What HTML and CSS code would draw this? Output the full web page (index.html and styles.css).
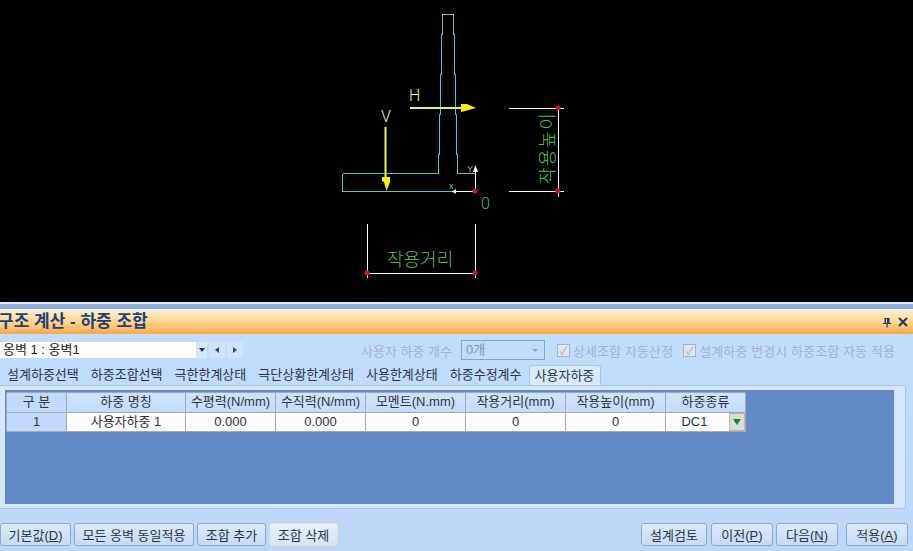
FILE: index.html
```html
<!DOCTYPE html>
<html lang="ko">
<head>
    <meta charset="UTF-8">
    <title>구조 계산 - 하중 조합</title>
    <link rel="stylesheet" href="styles.css">
</head>
<body>
    <div class="cad-view">
        <svg class="cad-svg" width="913" height="302" viewBox="0 0 913 302">
            <!-- wall outline -->
            <path class="wall" d="M342.5 173.5H438.5V154H439.5V114H440.5V74H441.5V34H442.5V14.5H453.5V34H454.5V74H455.5V114H456.5V154H457.5V173.5H475M342.5 173.5V191.5H452"/>
            <!-- axes -->
            <path class="dim" d="M452 191.5H475.5M475.5 191.5V170"/>
            <path class="axis-head" d="M452 191.5L456 189V194ZM475.5 165L473 172H478Z"/>
            <text class="axis-label" x="449" y="189">x</text>
            <text class="axis-label" x="467" y="172">Y</text>
            <!-- dimension lines -->
            <path class="dim" d="M509 108.5H564M509 191.5H564M558.5 108V197M367.5 224V278M475.5 224V278M367 273.5H475"/>
            <circle class="node" cx="558" cy="108" r="2.5"/>
            <circle class="node" cx="558" cy="191" r="2.5"/>
            <circle class="node" cx="475" cy="191" r="2.5"/>
            <circle class="node" cx="367" cy="273" r="2.5"/>
            <circle class="node" cx="475" cy="273" r="2.5"/>
            <!-- loads -->
            <path class="load" d="M410 108H462"/>
            <path class="load-head" d="M461 104H467L476 108L467 110.500L461 112Z"/>
            <path class="load" d="M385.500 127V178"/>
            <path class="load-head" d="M382 177H390V182L386.500 191L384 182L382 181Z"/>
            <text class="load-label" x="409" y="101">H</text>
            <text class="load-label" x="381" y="122">V</text>
            <!-- labels -->
            <text class="cad-label" x="387" y="266">작용거리</text>
            <text class="cad-label cad-label-side" transform="translate(554 184) rotate(-90)">작용높이</text>
            <text class="cad-zero" x="481" y="209">0</text>
        </svg>
    </div>
    <div class="splitter"></div>

    <div class="title-bar">
        <h1>구조 계산 - 하중 조합</h1>
        <div class="title-icons">
            <svg width="10" height="11" viewBox="0 0 10 11"><path d="M2.500 1H7.500V6H9V7H5.700V10.500H4.500V7H1V6H2.500ZM4 2V6H5V2Z" fill="#1c3a63"/></svg>
            <svg width="10" height="10" viewBox="0 0 10 10"><path d="M1 1L9 9M9 1L1 9" stroke="#1c3a63" stroke-width="2"/></svg>
        </div>
    </div>

    <div class="panel">
        <div class="option-row">
            <div class="wall-select">
                <span class="wall-combo">옹벽 1 : 옹벽1</span>
                <span class="combo-btn"><i class="arrow-down"></i></span>
                <span class="spin-btn"><i class="arrow-left"></i></span>
                <span class="spin-btn"><i class="arrow-right"></i></span>
            </div>
            <div class="options">
                <span class="muted count-label">사용자 하중 개수</span>
                <span class="count-combo">0개<i class="arrow-small"></i></span>
                <label class="check muted"><span class="check-box">✓</span>상세조합 자동산정</label>
                <label class="check muted"><span class="check-box">✓</span>설계하중 변경시 하중조합 자동 적용</label>
            </div>
        </div>

        <div class="tabs">
            <span class="tab">설계하중선택</span>
            <span class="tab">하중조합선택</span>
            <span class="tab">극한한계상태</span>
            <span class="tab">극단상황한계상태</span>
            <span class="tab">사용한계상태</span>
            <span class="tab">하중수정계수</span>
            <span class="tab active">사용자하중</span>
        </div>

        <div class="tab-body">
            <div class="grid-area">
                <table class="load-table">
                    <colgroup>
                        <col class="col-no">
                        <col class="col-name">
                        <col class="col-force">
                        <col class="col-force">
                        <col class="col-wide">
                        <col class="col-wide">
                        <col class="col-wide">
                        <col class="col-type">
                    </colgroup>
                    <thead>
                        <tr>
                            <th class="first">구 분</th>
                            <th>하중 명칭</th>
                            <th>수평력(N/mm)</th>
                            <th>수직력(N/mm)</th>
                            <th>모멘트(N.mm)</th>
                            <th>작용거리(mm)</th>
                            <th>작용높이(mm)</th>
                            <th>하중종류</th>
                        </tr>
                    </thead>
                    <tbody>
                        <tr>
                            <td class="first">1</td>
                            <td>사용자하중 1</td>
                            <td>0.000</td>
                            <td>0.000</td>
                            <td>0</td>
                            <td>0</td>
                            <td>0</td>
                            <td class="type-cell">DC1<span class="cell-btn"><i class="arrow-green"></i></span></td>
                        </tr>
                    </tbody>
                </table>
            </div>
        </div>

        <div class="button-row">
            <div class="button-group">
                <button class="btn btn-default">기본값(<u>D</u>)</button>
                <button class="btn btn-all">모든 옹벽 동일적용</button>
                <button class="btn btn-combo">조합 추가</button>
                <button class="btn btn-combo hot">조합 삭제</button>
            </div>
            <div class="button-group">
                <button class="btn btn-check">설계검토</button>
                <button class="btn btn-nav">이전(<u>P</u>)</button>
                <button class="btn btn-nav">다음(<u>N</u>)</button>
                <button class="btn btn-nav btn-apply">적용(<u>A</u>)</button>
            </div>
        </div>
    </div>
</body>
</html>
```

FILE: styles.css
```css
:root {
    --panel-blue: #bfd9fb;
    --grid-blue: #6089c5;
    --header-blue: #c2dafa;
    --line-gray: #a3a9b2;
    --text-dark: #2f343c;
    --text-muted: #a3b3c8;
    --cad-green: #4cc44c;
    --cad-yellow: #f4f04a;
}

* {
    box-sizing: border-box;
}

body {
    margin: 0;
    width: 913px;
    height: 551px;
    overflow: hidden;
    font-family: "Liberation Sans", "Noto Sans CJK KR", sans-serif;
    font-size: 13px;
    color: var(--text-dark);
    background: var(--panel-blue);
}

/* drawing area */
.cad-view {
    height: 302px;
    background: #000;
}

.cad-svg {
    display: block;
}

.wall {
    fill: none;
    stroke: #45c9cf;
    stroke-width: 1;
    shape-rendering: crispEdges;
}

.dim {
    fill: none;
    stroke: #fff;
    stroke-width: 1;
    shape-rendering: crispEdges;
}

.axis-head {
    fill: #fff;
}

.axis-label {
    font-size: 9px;
    fill: #a8a8a8;
}

.node {
    fill: #e01010;
}

.load {
    fill: none;
    stroke: var(--cad-yellow);
    stroke-width: 2;
}

.load-head {
    fill: #f8f000;
}

.load-label {
    font-family: Roboto, sans-serif;
    font-size: 16px;
    font-weight: 300;
    fill: #f6f68a;
}

.cad-label {
    font-family: "Noto Sans CJK KR", sans-serif;
    font-size: 18px;
    font-weight: 300;
    fill: var(--cad-green);
}

.cad-label-side {
    letter-spacing: 1.500px;
}

.cad-zero {
    font-family: Roboto, sans-serif;
    font-size: 16px;
    font-weight: 300;
    fill: var(--cad-green);
}

.splitter {
    height: 7px;
    border-top: 2px solid #dfe9f3;
    background: #8db0e1;
}

/* title */
.title-bar {
    height: 25px;
    padding: 0 5px 0 0;
    display: flex;
    justify-content: space-between;
    align-items: center;
    border-top: 1px solid #f6f3ea;
    background: linear-gradient(#fff0d2, #ffd592 50%, #f9a94a);
}

.title-bar h1 {
    margin: 0 0 0 -2px;
    font-size: 17px;
    line-height: 24px;
    color: #1d4272;
}

.title-icons {
    display: flex;
    align-items: center;
    gap: 6px;
}

/* option row */
.panel {
    height: 217px;
    background: linear-gradient(#c2dcfc, #bdd6f8);
}

.option-row {
    height: 31px;
    padding: 6px 18px 0 0;
    display: flex;
    justify-content: space-between;
    align-items: flex-start;
}

.wall-select {
    display: flex;
    margin-top: 2px;
}

.wall-combo {
    width: 196px;
    height: 16px;
    padding-left: 3px;
    line-height: 16px;
    background: #fff;
    color: #222;
}

.combo-btn {
    width: 11px;
    height: 16px;
    display: flex;
    align-items: center;
    justify-content: center;
    background: #d6e6fa;
}

.spin-btn {
    width: 16px;
    height: 16px;
    margin-left: 2px;
    display: flex;
    align-items: center;
    justify-content: center;
    background: #d2e2f6;
}

.arrow-down {
    border-top: 4px solid #1c3050;
    border-left: 3px solid transparent;
    border-right: 3px solid transparent;
}

.arrow-left {
    border-right: 4px solid #2c4a78;
    border-top: 3px solid transparent;
    border-bottom: 3px solid transparent;
}

.arrow-right {
    border-left: 4px solid #2c4a78;
    border-top: 3px solid transparent;
    border-bottom: 3px solid transparent;
}

.options {
    display: flex;
    align-items: center;
    height: 20px;
}

.muted {
    color: var(--text-muted);
}

.count-combo {
    width: 84px;
    height: 20px;
    margin: 0 12px 0 9px;
    padding-left: 4px;
    position: relative;
    line-height: 18px;
    border: 1px solid #87a4cc;
    color: #7f93ae;
}

.arrow-small {
    position: absolute;
    right: 6px;
    top: 8px;
    border-top: 3px solid #8ea2bc;
    border-left: 3px solid transparent;
    border-right: 3px solid transparent;
}

.check {
    display: flex;
    align-items: center;
    gap: 3px;
    margin-right: 10px;
    letter-spacing: 0.1px;
}

.check:last-child {
    margin-right: 0;
}

.check-box {
    width: 13px;
    height: 13px;
    display: block;
    font-size: 11px;
    line-height: 12px;
    text-align: center;
    border: 1px solid #a3b4ca;
    background: #dfe6ee;
    color: #a2adb8;
}

/* tabs */
.tabs {
    height: 20px;
    padding-left: 1px;
    display: flex;
    align-items: flex-end;
}

.tab {
    height: 20px;
    padding: 0 6px;
    line-height: 20px;
    color: #2a3648;
}

.tab.active {
    width: 72px;
    margin-left: 1px;
    padding: 0 5px;
    border: 1px solid #a9c4e6;
    border-bottom: none;
    border-radius: 3px 3px 0 0;
    line-height: 19px;
    background: #d9e9fc;
}

.tab-body {
    width: 906px;
    height: 124px;
    padding: 4px 11px 4px 5px;
    border: 1px solid #a9c4e6;
    border-left: none;
    border-radius: 0 3px 3px 0;
    background: #d7e7fb;
}

.grid-area {
    height: 114px;
    padding: 2px 0 0 1px;
    background: var(--grid-blue);
}

/* load table */
.load-table {
    width: 739px;
    table-layout: fixed;
    border-collapse: collapse;
}

.col-no { width: 60px; }
.col-name { width: 119px; }
.col-force { width: 90px; }
.col-wide { width: 100px; }
.col-type { width: 80px; }

.load-table th {
    height: 20px;
    padding: 0 0 1px;
    font-weight: normal;
    line-height: 16px;
    border: 1px solid var(--line-gray);
    background: linear-gradient(#cfe3fc, var(--header-blue));
}

.load-table td {
    height: 19px;
    padding: 0 0 1px;
    line-height: 16px;
    text-align: center;
    border: 1px solid var(--line-gray);
    background: #fdfbfb;
}

.load-table .first {
    background: var(--header-blue);
}

.load-table .type-cell {
    position: relative;
    padding-right: 22px;
}

.cell-btn {
    position: absolute;
    top: 0;
    right: 0;
    width: 16px;
    height: 18px;
    display: flex;
    align-items: center;
    justify-content: center;
    border: 1px solid #b4b8b4;
    background: #d8dcd4;
}

.arrow-green {
    border-top: 6px solid #0f8a20;
    border-left: 4px solid transparent;
    border-right: 4px solid transparent;
}

/* bottom buttons */
.button-row {
    margin-top: 14px;
    padding-right: 5px;
    display: flex;
    justify-content: space-between;
}

.button-group {
    display: flex;
    gap: 3px;
}

.btn {
    height: 23px;
    padding: 0;
    font-family: inherit;
    font-size: 13px;
    color: var(--text-dark);
    border: 1px solid #8ea8cb;
    border-radius: 3px;
    background: linear-gradient(#dce9fa, #c6daf4);
}

.btn.hot {
    border-color: #e9e2ae;
    background: linear-gradient(#e6f0fc, #d3e3f8);
}

.btn-default { width: 71px; }
.btn-all { width: 120px; }
.btn-combo { width: 69px; }
.btn-check { width: 66px; margin-right: 1px; }
.btn-nav { width: 62px; }
.btn-apply { margin-left: 5px; }
```
